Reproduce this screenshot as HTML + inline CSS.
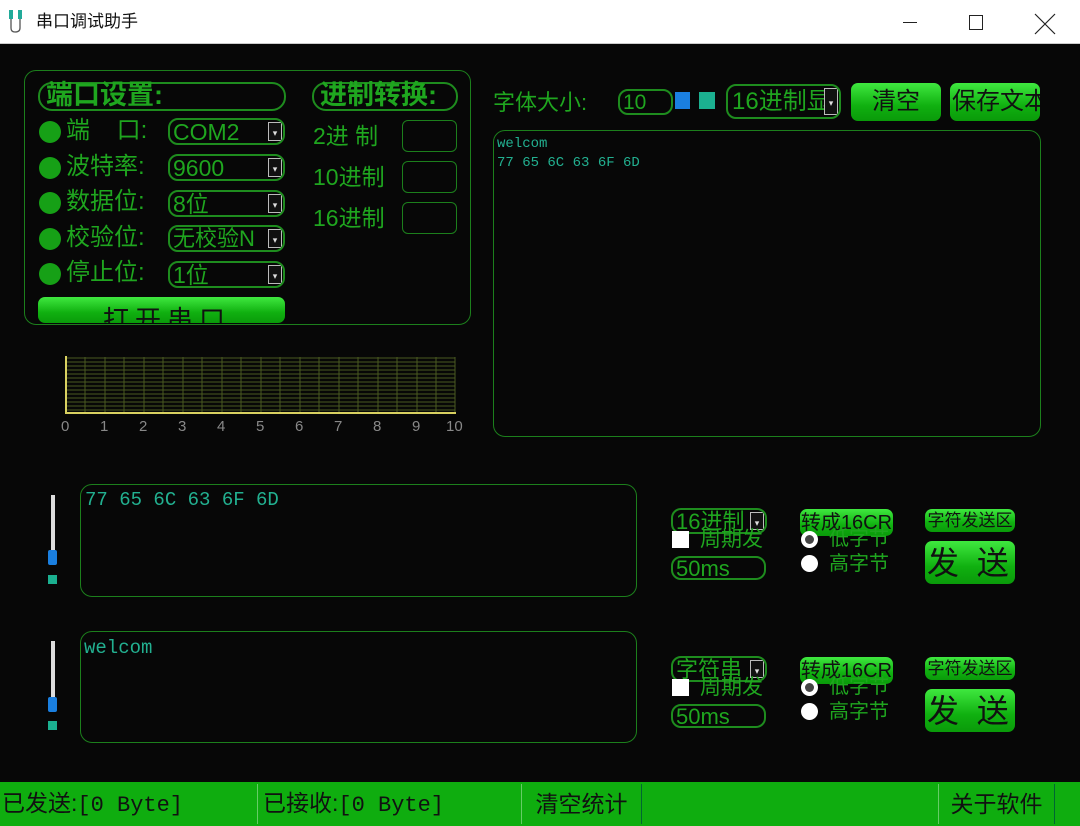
<!DOCTYPE html><html><head><meta charset="utf-8"><style>
*{margin:0;padding:0;box-sizing:border-box}
body{width:1080px;height:826px;background:#070707;position:relative;overflow:hidden;font-family:"Liberation Sans","Noto Sans CJK SC",sans-serif;color:#1fa61f;line-height:1.1}
.a{position:absolute;white-space:nowrap}
.box{position:absolute;border:1.5px solid #1c7f1c;border-radius:12px}
.pill{position:absolute;border:2px solid #1e8c1e;border-radius:14px}
.btn{position:absolute;border-radius:7px;background:linear-gradient(#3fe83f,#10b010 60%,#0a9a0a);color:#111;text-align:center;overflow:hidden;white-space:nowrap}
.cb{position:absolute;border:2px solid #1e8c1e;border-radius:10px;overflow:hidden;color:#1fa61f}
.cb .a{line-height:1}
.arr{position:absolute;right:1px;top:2px;bottom:2px;width:14px;background:#111;border:1px solid #bbb;color:#ddd;font-size:9px;text-align:center;line-height:20px}
.dot{position:absolute;width:22px;height:22px;border-radius:50%;background:#16a016}
.lab{font-size:24px}
.ibox{position:absolute;border:1.5px solid #1c7f1c;border-radius:6px;width:55px;height:32px;left:402px}
.rad{position:absolute;width:17px;height:17px;border-radius:50%;background:#fff}
.mono{font-family:"Liberation Mono","DejaVu Sans Mono",monospace;color:#22b090}
</style></head><body>
<div class="a" style="left:0;top:0;width:1080px;height:44px;background:#fff;border-bottom:1px solid #ccc"></div>
<svg class="a" style="left:8px;top:10px" width="16" height="24"><rect x="1" y="0" width="4" height="9" fill="#2a9" /><rect x="10" y="0" width="4" height="9" fill="#2a9"/><path d="M3 9 V18 Q3 22 7 22 Q12 22 12 18 V9" stroke="#555" fill="none" stroke-width="1.3"/></svg>
<div class="a" style="left:36px;top:13px;font-size:17px;color:#111">串口调试助手</div>
<div class="a" style="left:903px;top:22px;width:14px;height:1px;background:#222"></div>
<div class="a" style="left:969px;top:15px;width:14px;height:15px;border:1px solid #222"></div>
<svg class="a" style="left:1034px;top:13px" width="22" height="22"><path d="M1 1L21 21M21 1L1 21" stroke="#222" stroke-width="1.2"/></svg>

<div class="box" style="left:24px;top:70px;width:447px;height:255px"></div>
<div class="pill" style="left:38px;top:82px;width:248px;height:29px"></div>
<div class="a" style="left:46px;top:82px;font-size:27px;font-weight:bold;line-height:1">端口设置:</div>
<div class="pill" style="left:312px;top:82px;width:146px;height:29px"></div>
<div class="a" style="left:320px;top:82px;font-size:27px;font-weight:bold;line-height:1">进制转换:</div>

<div class="dot" style="left:39px;top:121px"></div><div class="a lab" style="left:66px;top:119px;line-height:1">端&nbsp;&nbsp;&nbsp;&nbsp;口:</div>
<div class="cb" style="left:168px;top:118px;width:117px;height:27px"><div class="a" style="left:3px;top:1px;font-size:23px">COM2</div><div class="arr">▾</div></div>
<div class="dot" style="left:39px;top:157px"></div><div class="a lab" style="left:66px;top:155px;line-height:1">波特率:</div>
<div class="cb" style="left:168px;top:154px;width:117px;height:27px"><div class="a" style="left:3px;top:1px;font-size:23px">9600</div><div class="arr">▾</div></div>
<div class="dot" style="left:39px;top:192px"></div><div class="a lab" style="left:66px;top:190px;line-height:1">数据位:</div>
<div class="cb" style="left:168px;top:190px;width:117px;height:27px"><div class="a" style="left:3px;top:1px;font-size:23px">8位</div><div class="arr">▾</div></div>
<div class="dot" style="left:39px;top:228px"></div><div class="a lab" style="left:66px;top:226px;line-height:1">校验位:</div>
<div class="cb" style="left:168px;top:225px;width:117px;height:27px"><div class="a" style="left:3px;top:1px;font-size:22px">无校验N</div><div class="arr">▾</div></div>
<div class="dot" style="left:39px;top:263px"></div><div class="a lab" style="left:66px;top:261px;line-height:1">停止位:</div>
<div class="cb" style="left:168px;top:261px;width:117px;height:27px"><div class="a" style="left:3px;top:1px;font-size:23px">1位</div><div class="arr">▾</div></div>
<div class="btn" style="left:38px;top:297px;width:247px;height:26px"><div class="a" style="left:65px;top:10px;font-size:26px;color:#111;letter-spacing:6px;line-height:1">打开串口</div></div>

<div class="a" style="left:313px;top:125px;font-size:23px;line-height:1">2进&nbsp;制</div><div class="ibox" style="top:120px"></div>
<div class="a" style="left:313px;top:166px;font-size:23px;line-height:1">10进制</div><div class="ibox" style="top:161px"></div>
<div class="a" style="left:313px;top:207px;font-size:23px;line-height:1">16进制</div><div class="ibox" style="top:202px"></div>

<svg class="a" style="left:30px;top:350px" width="440" height="90">
<g stroke="#4a5a20" stroke-width="1">
<path d="M36 8H425M36 12H425M36 16H425M36 20H425M36 24H425M36 28H425M36 32H425M36 36H425M36 40H425M36 44H425M36 48H425M36 52H425M36 56H425M36 60H425"/>
<path d="M55 7V62M75 7V62M94 7V62M114 7V62M133 7V62M153 7V62M172 7V62M192 7V62M211 7V62M231 7V62M250 7V62M270 7V62M289 7V62M309 7V62M328 7V62M348 7V62M367 7V62M387 7V62M406 7V62M425 7V62"/></g>
<path d="M36 6V63H426" stroke="#d8d060" stroke-width="2" fill="none"/>
<g fill="#888" font-size="15" font-family="Liberation Sans"><text x="31" y="81">0</text><text x="70" y="81">1</text><text x="109" y="81">2</text><text x="148" y="81">3</text><text x="187" y="81">4</text><text x="226" y="81">5</text><text x="265" y="81">6</text><text x="304" y="81">7</text><text x="343" y="81">8</text><text x="382" y="81">9</text><text x="416" y="81">10</text></g>
</svg>

<div class="a" style="left:51px;top:495px;width:4px;height:70px;background:#ddd"></div>
<div class="a" style="left:48px;top:550px;width:9px;height:15px;background:#1a7fe0;border-radius:2px"></div>
<div class="a" style="left:48px;top:575px;width:9px;height:9px;background:#1bb090"></div>
<div class="box" style="left:80px;top:484px;width:557px;height:113px"></div>
<div class="a mono" style="left:85px;top:490px;font-size:19px">77 65 6C 63 6F 6D</div>
<div class="a" style="left:51px;top:641px;width:4px;height:71px;background:#ddd"></div>
<div class="a" style="left:48px;top:697px;width:9px;height:15px;background:#1a7fe0;border-radius:2px"></div>
<div class="a" style="left:48px;top:721px;width:9px;height:9px;background:#1bb090"></div>
<div class="box" style="left:80px;top:631px;width:557px;height:112px"></div>
<div class="a mono" style="left:84px;top:638px;font-size:19px">welcom</div>

<div class="a" style="left:493px;top:92px;font-size:22px;line-height:1">字体大小:</div>
<div class="cb" style="left:618px;top:89px;width:55px;height:26px"><div class="a" style="left:3px;top:1px;font-size:21px">10</div></div>
<div class="a" style="left:675px;top:92px;width:15px;height:17px;background:#1a7fe0"></div>
<div class="a" style="left:699px;top:92px;width:16px;height:17px;background:#1bb090"></div>
<div class="cb" style="left:726px;top:84px;width:115px;height:35px"><div class="a" style="left:4px;top:4px;font-size:24px">16进制显</div><div class="arr" style="line-height:28px">▾</div></div>
<div class="btn" style="left:851px;top:83px;width:90px;height:38px;font-size:24px;line-height:37px">清空</div>
<div class="btn" style="left:950px;top:83px;width:90px;height:38px;font-size:24px;line-height:37px;text-align:left;padding-left:2px">保存文本</div>
<div class="box" style="left:493px;top:130px;width:548px;height:307px"></div>
<div class="a mono" style="left:497px;top:135px;font-size:14px;line-height:19px">welcom<br>77 65 6C 63 6F 6D</div>

<div class="cb" style="left:671px;top:508px;width:96px;height:26px"><div class="a" style="left:3px;top:1px;font-size:22px">16进制</div><div class="arr">▾</div></div>
<div class="a" style="left:672px;top:531px;width:17px;height:17px;background:#fff"></div><div class="a" style="left:700px;top:529px;font-size:21px;line-height:1">周期发</div>
<div class="cb" style="left:671px;top:556px;width:95px;height:24px"><div class="a" style="left:3px;top:0px;font-size:22px">50ms</div></div>
<div class="btn" style="left:800px;top:509px;width:93px;height:27px;font-size:20px;line-height:28px">转成16CR</div>
<div class="rad" style="left:801px;top:531px"><div class="a" style="left:4px;top:4px;width:9px;height:9px;border-radius:50%;background:#444"></div></div><div class="a" style="left:829px;top:529px;font-size:20px;line-height:1">低字节</div>
<div class="rad" style="left:801px;top:555px"></div><div class="a" style="left:829px;top:554px;font-size:20px;line-height:1">高字节</div>
<div class="btn" style="left:925px;top:509px;width:90px;height:23px;font-size:17px;line-height:23px">字符发送区</div>
<div class="btn" style="left:925px;top:541px;width:90px;height:43px;font-size:32px;line-height:44px;text-align:left;padding-left:2px">发&nbsp;&nbsp;送</div>

<div class="cb" style="left:671px;top:656px;width:96px;height:26px"><div class="a" style="left:3px;top:1px;font-size:22px">字符串</div><div class="arr">▾</div></div>
<div class="a" style="left:672px;top:679px;width:17px;height:17px;background:#fff"></div><div class="a" style="left:700px;top:677px;font-size:21px;line-height:1">周期发</div>
<div class="cb" style="left:671px;top:704px;width:95px;height:24px"><div class="a" style="left:3px;top:0px;font-size:22px">50ms</div></div>
<div class="btn" style="left:800px;top:657px;width:93px;height:27px;font-size:20px;line-height:28px">转成16CR</div>
<div class="rad" style="left:801px;top:679px"><div class="a" style="left:4px;top:4px;width:9px;height:9px;border-radius:50%;background:#444"></div></div><div class="a" style="left:829px;top:677px;font-size:20px;line-height:1">低字节</div>
<div class="rad" style="left:801px;top:703px"></div><div class="a" style="left:829px;top:702px;font-size:20px;line-height:1">高字节</div>
<div class="btn" style="left:925px;top:657px;width:90px;height:23px;font-size:17px;line-height:23px">字符发送区</div>
<div class="btn" style="left:925px;top:689px;width:90px;height:43px;font-size:32px;line-height:44px;text-align:left;padding-left:2px">发&nbsp;&nbsp;送</div>

<div class="a" style="left:0;top:782px;width:1080px;height:44px;background:#0fad0f"></div>
<div class="a" style="left:2px;top:792px;font-size:23px;color:#111;line-height:1">已发送:<span class="mono" style="color:#111;font-size:22px">[0 Byte]</span></div>
<div class="a" style="left:257px;top:784px;width:1px;height:40px;background:#6c6"></div>
<div class="a" style="left:263px;top:792px;font-size:23px;color:#111;line-height:1">已接收:<span class="mono" style="color:#111;font-size:22px">[0 Byte]</span></div>
<div class="a" style="left:521px;top:784px;width:121px;height:40px;border-left:1px solid #6c6;border-right:1px solid #063;font-size:23px;color:#111;text-align:center;line-height:40px">清空统计</div>
<div class="a" style="left:938px;top:784px;width:117px;height:40px;border-left:1px solid #6c6;border-right:1px solid #063;font-size:23px;color:#111;text-align:center;line-height:40px">关于软件</div>
</body></html>
